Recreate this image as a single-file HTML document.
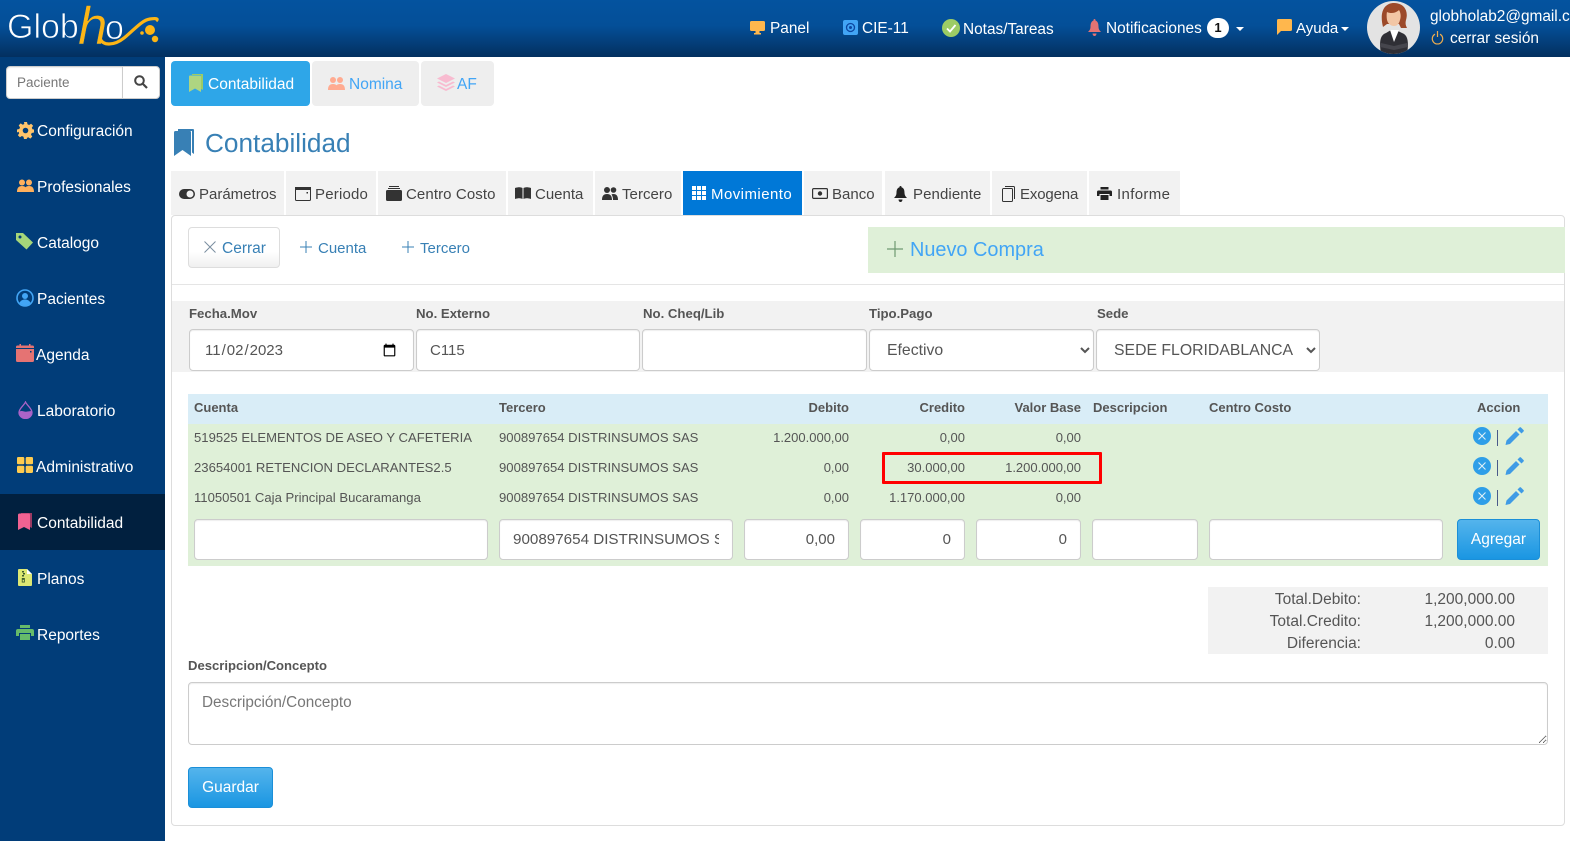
<!DOCTYPE html>
<html lang="es">
<head>
<meta charset="utf-8">
<title>Contabilidad</title>
<style>
*{box-sizing:border-box}
html,body{margin:0;padding:0;width:1570px;height:841px;overflow:hidden;background:#fff;font-family:"Liberation Sans",Arial,sans-serif;color:#555}
.a,.t,svg.i{position:absolute}
.t{white-space:nowrap;line-height:20px}
#hd{position:absolute;left:0;top:0;width:1570px;height:57px;background:linear-gradient(#04539f 0%,#044f98 45%,#03305f 100%)}
#hd .t{color:#fff;font-size:15.4px}
#sb{position:absolute;left:0;top:57px;width:165px;height:784px;background:#013d79}
.m{color:#fff;font-size:15.5px;left:37px}
.tb{position:absolute;top:171px;height:44px;background:#f2f2f2}
.tl{font-size:15px;color:#444}
.lab{font-weight:bold;font-size:13.2px;color:#555}
input,select,textarea{font-family:"Liberation Sans",Arial,sans-serif;position:absolute;background:#fff;border:1px solid #ccc;border-radius:4px;color:#555;font-size:15px;margin:0;box-shadow:inset 0 1px 1px rgba(0,0,0,.07);outline:0}
::placeholder{color:#777;opacity:1}
.th{font-weight:bold;font-size:13px;color:#555}
.td{font-size:13.1px;color:#555}
.n{font-size:13px;color:#555;text-align:right}
.s{font-size:15.5px}
</style>
</head>
<body>
<div id="hd">
<svg class="a" style="left:0;top:0" width="170" height="56" viewBox="0 0 170 56">
<text x="7" y="38" font-family="Liberation Sans" font-size="34" fill="#fff" stroke="#044c93" stroke-width=".8">Glob</text>
<text x="105" y="39" font-family="Liberation Sans" font-size="34" fill="#fff" stroke="#044c93" stroke-width=".8">o</text>
<text x="78" y="44" font-family="Liberation Sans" font-style="italic" font-size="53" fill="#fdb515" stroke="#044c93" stroke-width=".5">h</text>
<path d="M100 38C102 46 114 46 124 38S142 20 150 19 158 19 156 21" fill="none" stroke="#fdb515" stroke-width="3.2"/>
<circle cx="150" cy="30" r="5" fill="#fdb515"/><circle cx="155" cy="39" r="3.2" fill="#fdb515"/><circle cx="142" cy="33" r="1.8" fill="#fdb515"/>
</svg>
<svg class="i" style="left:750px;top:21px" width="15" height="14" viewBox="0 0 15 14"><rect width="15" height="10" rx="1.5" fill="#ffb74d"/><path d="M5.5 10h4v2h1.5v1.5H4V12h1.500z" fill="#ffb74d"/></svg>
<div class="t" style="left:770px;top:19px">Panel</div>
<svg class="i" style="left:843px;top:20px" width="15" height="15" viewBox="0 0 15 15"><rect width="15" height="15" rx="2" fill="#42a5f5"/><circle cx="7.500" cy="7.500" r="4" fill="none" stroke="#0d47a1" stroke-width="1.300"/><circle cx="7.500" cy="7.500" r="1.500" fill="#0d47a1"/></svg>
<div class="t" style="left:862px;top:19px">CIE-11</div>
<svg class="i" style="left:942px;top:19px" width="18" height="18" viewBox="0 0 18 18"><circle cx="9" cy="9" r="9" fill="#9ccc65"/><path d="M5 9.500l3 3 5.500-6.500" fill="none" stroke="#fff" stroke-width="1.800"/></svg>
<div class="t" style="left:963px;top:20px">Notas/Tareas</div>
<svg class="i" style="left:1088px;top:19px" width="13" height="17" viewBox="0 0 13 17"><path d="M6.500 0c1 0 1 1 1 1.500C10 2.500 10.500 5 10.500 8c0 2 1 3.500 2.500 5H0c1.500-1.500 2.500-3 2.500-5 0-3 .5-5.500 3-6.500C5.500 1 5.500 0 6.500 0zM4.500 14.500h4c0 1.500-1 2.500-2 2.500s-2-1-2-2.500z" fill="#e57373"/></svg>
<div class="t" style="left:1106px;top:19px">Notificaciones</div>
<div class="a" style="left:1207px;top:18px;width:22px;height:20px;border-radius:11px;background:#fff;color:#111;font-size:13px;font-weight:bold;text-align:center;line-height:20px">1</div>
<div class="a" style="left:1236px;top:27px;border-left:4px solid transparent;border-right:4px solid transparent;border-top:4px solid #fff"></div>
<svg class="i" style="left:1277px;top:19px" width="15" height="16" viewBox="0 0 15 16"><path d="M1.500 0h12A1.500 1.500 0 0 1 15 1.500v9a1.500 1.500 0 0 1-1.500 1.500H4l-4 4V1.500A1.500 1.500 0 0 1 1.500 0z" fill="#ffb74d"/></svg>
<div class="t" style="left:1296px;top:19px;font-size:15px!important">Ayuda</div>
<div class="a" style="left:1341px;top:27px;border-left:4px solid transparent;border-right:4px solid transparent;border-top:4px solid #fff"></div>
<svg class="i" style="left:1367px;top:1px" width="53" height="53" viewBox="0 0 53 53">
<defs><clipPath id="c"><circle cx="26.500" cy="26.500" r="26.500"/></clipPath></defs>
<g clip-path="url(#c)"><rect width="53" height="53" fill="#e3e3e3"/>
<path d="M16 26C12 10 18 2 27 2s15 7 12 17c-1 4 0 6 1 8l-6 0-2-4H20z" fill="#9c4a2a"/>
<path d="M20 11c4 2 9 1 12-2 2 3 2 7 1 10-1 4-3 6-6 6s-6-2-7-6c-.5-3-.5-6 0-8z" fill="#f2c6a5"/>
<path d="M14 53c-2-12-1-19 5-21l5-3h5l6 3c6 2 7 9 5 21z" fill="#2f2f35"/>
<path d="M23 29l4 12 5-12z" fill="#fff"/>
<path d="M14 42l13 3 13-3 1 4-14 3-14-3z" fill="#46464d"/></g></svg>
<div class="t" style="left:1430px;top:7px">globholab2@gmail.com</div>
<svg class="i" style="left:1431px;top:31px" width="13" height="14" viewBox="0 0 13 14"><path d="M4 3.200A5.200 5.200 0 1 0 9 3.200M6.500 0v6" fill="none" stroke="#f0ad4e" stroke-width="1.200"/></svg>
<div class="t" style="left:1450px;top:29px">cerrar sesión</div>
</div>

<div id="sb"></div>
<input class="a" style="left:6px;top:66px;width:117px;height:33px;border-radius:4px 0 0 4px;padding:0 10px;font-size:13.500px" placeholder="Paciente">
<div class="a" style="left:122px;top:66px;width:38px;height:33px;background:#fff;border:1px solid #ccc;border-radius:0 4px 4px 0"></div>
<svg class="i" style="left:134px;top:75px" width="14" height="14" viewBox="0 0 14 14"><circle cx="5.500" cy="5.500" r="4.300" fill="none" stroke="#444" stroke-width="2"/><path d="M8.500 8.500L13 13" stroke="#444" stroke-width="2.200"/></svg>

<svg class="i" style="left:17px;top:122px" width="17" height="17" viewBox="0 0 17 17"><path fill-rule="evenodd" d="M7 0h3l.5 2.300 1.600.7 2-1.300 2 2-1.300 2 .7 1.600L17 7.500v3l-2.300.5-.7 1.600 1.300 2-2 2-2-1.300-1.600.7L10 17H7l-.5-2.300-1.600-.7-2 1.300-2-2 1.300-2-.7-1.600L0 10.500v-3l2.300-.5.7-1.600-1.300-2 2-2 2 1.300 1.600-.7zM8.500 5.700a2.800 2.800 0 1 0 0 5.600 2.800 2.800 0 0 0 0-5.600z" fill="#ffc46b"/></svg>
<div class="t m" style="top:122px">Configuración</div>
<svg class="i" style="left:17px;top:179px" width="17" height="14" viewBox="0 0 17 14"><circle cx="5" cy="3.500" r="3" fill="#ffb05c"/><circle cx="12" cy="3.500" r="3" fill="#ffb05c"/><path d="M0 13c0-4 1.500-6 5-6 1.500 0 2.500.4 3.500 1.200C9.500 7.400 10.500 7 12 7c3.500 0 5 2 5 6z" fill="#ffb05c"/></svg>
<div class="t m" style="top:178px">Profesionales</div>
<svg class="i" style="left:16px;top:233px" width="18" height="17" viewBox="0 0 18 17"><path d="M0 0h7l10 9.500-6.500 7L0 7z" fill="#a5d67a"/><circle cx="4" cy="4" r="1.500" fill="#013d79"/></svg>
<div class="t m" style="top:234px">Catalogo</div>
<svg class="i" style="left:16px;top:289px" width="18" height="18" viewBox="0 0 18 18"><circle cx="9" cy="9" r="8" fill="none" stroke="#42a5f5" stroke-width="1.600"/><circle cx="9" cy="7" r="3" fill="#42a5f5"/><path d="M3.500 14c1-2.500 3-3.500 5.500-3.500s4.500 1 5.500 3.500c-1.500 1.500-3.500 2.500-5.500 2.500s-4-1-5.500-2.500z" fill="#42a5f5"/></svg>
<div class="t m" style="top:290px">Pacientes</div>
<svg class="i" style="left:16px;top:344px" width="18" height="18" viewBox="0 0 18 18"><path d="M1.500 1.500h2V0h1.500v1.500h8V0h1.500v1.500h2A1.500 1.500 0 0 1 18 3v1H0V3a1.500 1.500 0 0 1 1.500-1.500zM0 5h18v11.500A1.500 1.500 0 0 1 16.500 18h-15A1.500 1.500 0 0 1 0 16.500z" fill="#e57373"/><rect x="14" y="7" width="1.500" height="1.500" fill="#013d79"/></svg>
<div class="t m" style="top:346px;left:36px">Agenda</div>
<svg class="i" style="left:18px;top:401px" width="15" height="18" viewBox="0 0 15 18"><path d="M7.500 1C9 4.500 14 7.500 14 11.500a6.500 6 0 0 1-13 0C1 7.500 6 4.500 7.500 1z" fill="none" stroke="#ab63c8" stroke-width="1.300"/><path d="M1.500 10.500c3-1.500 5 1 8 0l4-.5c.5 5-3 7.500-6 7.500s-6.500-2.500-6-7z" fill="#ab63c8"/></svg>
<div class="t m" style="top:402px">Laboratorio</div>
<svg class="i" style="left:17px;top:457px" width="16" height="16" viewBox="0 0 16 16"><g fill="#ffcb4f"><rect width="7.300" height="7.300" rx="1.200"/><rect x="8.700" width="7.300" height="7.300" rx="1.200"/><rect y="8.700" width="7.300" height="7.300" rx="1.200"/><rect x="8.700" y="8.700" width="7.300" height="7.300" rx="1.200"/></g></svg>
<div class="t m" style="top:458px;left:36px">Administrativo</div>
<div class="a" style="left:0;top:494px;width:165px;height:56px;background:#01203f"></div>
<svg class="i" style="left:18px;top:513px" width="14" height="17" viewBox="0 0 14 17"><path d="M3 0h11v15l-2-1V1H3z" fill="#9c3a63"/><path d="M0 2a1.500 1.500 0 0 1 1.500-1.500H11a1 1 0 0 1 1 1V17L6 14l-6 3z" fill="#f06292"/></svg>
<div class="t m" style="top:514px">Contabilidad</div>
<svg class="i" style="left:18px;top:569px" width="14" height="17" viewBox="0 0 14 17"><path d="M1 0h8l5 5v11a1 1 0 0 1-1 1H1a1 1 0 0 1-1-1V1a1 1 0 0 1 1-1z" fill="#dde873"/><path d="M9 0v5h5z" fill="#fff"/><path d="M4 2h2v1.500H4zM5 4h2v1.500H5zM4 6h2v1.500H4zM3.800 9h3v4.500h-3z" fill="#3d5c2d"/><rect x="4.600" y="10.800" width="1.400" height="1.800" fill="#dde873"/></svg>
<div class="t m" style="top:570px">Planos</div>
<svg class="i" style="left:16px;top:625px" width="18" height="16" viewBox="0 0 18 16"><path d="M4 0h10v3H4zM2 4h14a2 2 0 0 1 2 2v5h-3V8H3v3H0V6a2 2 0 0 1 2-2zM4 9h10v6H4z" fill="#66bb6a"/></svg>
<div class="t m" style="top:626px">Reportes</div>

<div class="a" style="left:171px;top:61px;width:139px;height:45px;background:#2ea6e8;border-radius:4px"></div>
<div class="a" style="left:312px;top:61px;width:107px;height:45px;background:#eee;border-radius:4px"></div>
<div class="a" style="left:421px;top:61px;width:73px;height:45px;background:#eee;border-radius:4px"></div>
<svg class="i" style="left:189px;top:74px" width="14" height="18" viewBox="0 0 14 18"><path d="M3 0h11v16l-2-1V1H3z" fill="#9ccc65"/><path d="M0 2.500a1 1 0 0 1 1-1h10a1 1 0 0 1 1 1V18l-6-3.500L0 18z" fill="#aed581"/></svg>
<div class="t" style="left:208px;top:75px;font-size:15.500px;color:#fff">Contabilidad</div>
<svg class="i" style="left:328px;top:77px" width="17" height="13" viewBox="0 0 17 13"><circle cx="5" cy="3" r="3" fill="#ffab91"/><circle cx="12" cy="3" r="3" fill="#ffab91"/><path d="M0 13c0-4 1.500-6 5-6 1.500 0 2.500.4 3.500 1.200C9.500 7.400 10.500 7 12 7c3.500 0 5 2 5 6z" fill="#ffab91"/></svg>
<div class="t" style="left:349px;top:75px;font-size:15.500px;color:#42a5f5">Nomina</div>
<svg class="i" style="left:437px;top:74px" width="18" height="17" viewBox="0 0 18 17"><path d="M9 0l9 4.500L9 9 0 4.500z" fill="#f8bbd0"/><path d="M2 7.500l7 3.500 7-3.500 2 1L9 13 0 8.500zM2 11.500l7 3.500 7-3.500 2 1L9 17 0 12.500z" fill="#f8bbd0"/></svg>
<div class="t" style="left:457px;top:75px;font-size:15.500px;color:#42a5f5">AF</div>

<svg class="i" style="left:174px;top:129px" width="20" height="27" viewBox="0 0 20 27"><path d="M4 0h15a1 1 0 0 1 1 1v24l-2-1.500V2H4z" fill="#3880b5"/><path d="M0 3.500A1.500 1.500 0 0 1 1.500 2H16a1 1 0 0 1 1 1v24l-8.500-6L0 27z" fill="#3880b5"/></svg>
<div class="t" style="left:205px;top:128px;font-size:26.200px;line-height:30px;color:#3880b5">Contabilidad</div>

<div class="tb" style="left:171px;width:113px"></div>
<div class="tb" style="left:286px;width:90px"></div>
<div class="tb" style="left:378px;width:128px"></div>
<div class="tb" style="left:508px;width:85px"></div>
<div class="tb" style="left:595px;width:86px"></div>
<div class="tb" style="left:683px;width:119px;background:#0078d7"></div>
<div class="tb" style="left:804px;width:78px"></div>
<div class="tb" style="left:885px;width:105px"></div>
<div class="tb" style="left:992px;width:95px"></div>
<div class="tb" style="left:1089px;width:91px"></div>

<svg class="i" style="left:179px;top:189px" width="16" height="10" viewBox="0 0 16 10"><rect width="16" height="10" rx="5" fill="#333"/><circle cx="11" cy="5" r="3.500" fill="#f2f2f2"/></svg>
<div class="t tl" style="left:199px;top:185px">Parámetros</div>
<svg class="i" style="left:295px;top:186px" width="16" height="16" viewBox="0 0 16 16"><path d="M1.500 1.500h13a1 1 0 0 1 1 1v11a1 1 0 0 1-1 1h-13a1 1 0 0 1-1-1v-11a1 1 0 0 1 1-1z" fill="none" stroke="#333"/><rect x="0" y="1" width="16" height="3" fill="#333"/><rect x="11.500" y="6" width="1.500" height="1.500" fill="#333"/></svg>
<div class="t tl" style="left:315px;top:185px;letter-spacing:.2px">Periodo</div>
<svg class="i" style="left:386px;top:186px" width="16" height="15" viewBox="0 0 16 15"><path d="M3 0h10v1H3zM2 2h12v1H2zM1.500 4h13A1.500 1.500 0 0 1 16 5.500v8a1.500 1.500 0 0 1-1.500 1.500h-13A1.500 1.500 0 0 1 0 13.500v-8A1.500 1.500 0 0 1 1.500 4z" fill="#333"/></svg>
<div class="t tl" style="left:406px;top:185px;letter-spacing:.1px">Centro Costo</div>
<svg class="i" style="left:515px;top:187px" width="16" height="13" viewBox="0 0 16 13"><path d="M0 1c3-1 5.500-1 7.500 0v11C5.500 11 3 11 0 12zM8.500 1c2-1 4.500-1 7.500 0v11c-3-1-5.500-1-7.500 0z" fill="#333"/></svg>
<div class="t tl" style="left:535px;top:185px">Cuenta</div>
<svg class="i" style="left:602px;top:187px" width="16" height="13" viewBox="0 0 16 13"><circle cx="5" cy="3" r="3" fill="#333"/><circle cx="11.500" cy="3" r="2.800" fill="#333"/><path d="M0 13c0-4 1.500-6 5-6s5 2 5 6zM11 13c0-2.500-.5-4-1.500-5.500.6-.4 1.200-.5 2-.5 3 0 4.500 2 4.500 6z" fill="#333"/></svg>
<div class="t tl" style="left:622px;top:185px;letter-spacing:.05px">Tercero</div>
<svg class="i" style="left:692px;top:186px" width="14" height="14" viewBox="0 0 14 14"><g fill="#fff"><rect width="4" height="4"/><rect x="5" width="4" height="4"/><rect x="10" width="4" height="4"/><rect y="5" width="4" height="4"/><rect x="5" y="5" width="4" height="4"/><rect x="10" y="5" width="4" height="4"/><rect y="10" width="4" height="4"/><rect x="5" y="10" width="4" height="4"/><rect x="10" y="10" width="4" height="4"/></g></svg>
<div class="t tl" style="left:711px;top:185px;color:#fff;letter-spacing:.45px">Movimiento</div>
<svg class="i" style="left:812px;top:188px" width="16" height="11" viewBox="0 0 16 11"><rect x=".6" y=".6" width="14.800" height="9.800" rx="1" fill="none" stroke="#333" stroke-width="1.200"/><circle cx="8" cy="5.500" r="2.200" fill="#333"/></svg>
<div class="t tl" style="left:832px;top:185px">Banco</div>
<svg class="i" style="left:894px;top:186px" width="13" height="16" viewBox="0 0 13 16"><path d="M6.500 0c1 0 1 .7 1 1.300C10 2 10.500 4.500 10.500 7c0 2 1 3.500 2.500 5H0c1.500-1.500 2.500-3 2.500-5 0-2.500.5-5 3-5.700C5.500.7 5.500 0 6.500 0zM4.500 13.500h4c0 1.500-1 2.500-2 2.500s-2-1-2-2.500z" fill="#222"/></svg>
<div class="t tl" style="left:913px;top:185px;letter-spacing:.1px">Pendiente</div>
<svg class="i" style="left:1002px;top:186px" width="13" height="16" viewBox="0 0 13 16"><path d="M1.500 2.500h8a1 1 0 0 1 1 1v11a1 1 0 0 1-1 1h-8a1 1 0 0 1-1-1v-11a1 1 0 0 1 1-1zM3 .5h8.500a1 1 0 0 1 1 1V13" fill="none" stroke="#333"/></svg>
<div class="t tl" style="left:1020px;top:185px;letter-spacing:-.15px">Exogena</div>
<svg class="i" style="left:1097px;top:187px" width="15" height="13" viewBox="0 0 15 13"><path d="M3.500 0h8v2.500h-8zM1.500 3.500h12A1.500 1.500 0 0 1 15 5v4h-2.500V7h-10v2H0V5a1.500 1.500 0 0 1 1.500-1.500zM3.500 8h8v5h-8z" fill="#222"/></svg>
<div class="t tl" style="left:1117px;top:185px;letter-spacing:.35px">Informe</div>

<div class="a" style="left:171px;top:215px;width:1394px;height:611px;border:1px solid #ddd;border-radius:4px"></div>
<div class="a" style="left:188px;top:227px;width:92px;height:41px;border:1px solid #ddd;border-radius:4px;background:linear-gradient(#fff 60%,#f0f0f0)"></div>
<svg class="i" style="left:204px;top:241px" width="12" height="12" viewBox="0 0 12 12"><path d="M.5.500l11 11M11.500.500l-11 11" stroke="#7a8ea0" fill="none"/></svg>
<div class="t s" style="left:222px;top:239px;color:#3880b5">Cerrar</div>
<svg class="i" style="left:300px;top:241px" width="12" height="12" viewBox="0 0 12 12"><path d="M6 0v12M0 6h12" stroke="#3880b5"/></svg>
<div class="t" style="left:318px;top:239px;font-size:15px;color:#3880b5">Cuenta</div>
<svg class="i" style="left:402px;top:241px" width="12" height="12" viewBox="0 0 12 12"><path d="M6 0v12M0 6h12" stroke="#3880b5"/></svg>
<div class="t" style="left:420px;top:239px;font-size:15px;color:#3880b5">Tercero</div>
<div class="a" style="left:868px;top:227px;width:697px;height:46px;background:#dff0d8"></div>
<svg class="i" style="left:887px;top:241px" width="16" height="16" viewBox="0 0 16 16"><path d="M8 0v16M0 8h16" stroke="#6f9a72" stroke-width="1.200"/></svg>
<div class="t" style="left:910px;top:238px;font-size:19.900px;line-height:24px;color:#42a5f5">Nuevo Compra</div>
<div class="a" style="left:172px;top:284px;width:1392px;height:1px;background:#e5e5e5"></div>

<div class="a" style="left:172px;top:301px;width:1392px;height:71px;background:#f2f2f2"></div>
<div class="t lab" style="left:189px;top:304px">Fecha.Mov</div>
<div class="t lab" style="left:416px;top:304px">No. Externo</div>
<div class="t lab" style="left:643px;top:304px">No. Cheq/Lib</div>
<div class="t lab" style="left:869px;top:304px">Tipo.Pago</div>
<div class="t lab" style="left:1097px;top:304px">Sede</div>
<input type="date" value="2023-11-02" style="left:189px;top:329px;width:225px;height:42px;padding:0 14px">
<input value="C115" style="left:416px;top:329px;width:224px;height:42px;padding:0 13px">
<input style="left:642px;top:329px;width:225px;height:42px">
<select style="left:869px;top:329px;width:225px;height:42px;padding:1px 13px 0;font-size:15.800px"><option>Efectivo</option></select>
<select style="left:1096px;top:329px;width:224px;height:42px;padding:1px 0 0 13px;font-size:15.800px"><option>SEDE FLORIDABLANCA</option></select>

<div class="a" style="left:188px;top:394px;width:1360px;height:30px;background:#d9edf7"></div>
<div class="a" style="left:188px;top:424px;width:1360px;height:142px;background:#dff0d8"></div>
<div class="t th" style="left:194px;top:398px">Cuenta</div>
<div class="t th" style="left:499px;top:398px">Tercero</div>
<div class="t th" style="left:749px;top:398px;width:100px;text-align:right">Debito</div>
<div class="t th" style="left:865px;top:398px;width:100px;text-align:right">Credito</div>
<div class="t th" style="left:981px;top:398px;width:100px;text-align:right">Valor Base</div>
<div class="t th" style="left:1093px;top:398px">Descripcion</div>
<div class="t th" style="left:1209px;top:398px">Centro Costo</div>
<div class="t th" style="left:1477px;top:398px">Accion</div>

<div class="t td" style="left:194px;top:428px">519525 ELEMENTOS DE ASEO Y CAFETERIA</div>
<div class="t td" style="left:499px;top:428px">900897654 DISTRINSUMOS SAS</div>
<div class="t n" style="left:749px;top:428px;width:100px">1.200.000,00</div>
<div class="t n" style="left:865px;top:428px;width:100px">0,00</div>
<div class="t n" style="left:981px;top:428px;width:100px">0,00</div>
<div class="t td" style="left:194px;top:458px">23654001 RETENCION DECLARANTES2.5</div>
<div class="t td" style="left:499px;top:458px">900897654 DISTRINSUMOS SAS</div>
<div class="t n" style="left:749px;top:458px;width:100px">0,00</div>
<div class="t n" style="left:865px;top:458px;width:100px">30.000,00</div>
<div class="t n" style="left:981px;top:458px;width:100px">1.200.000,00</div>
<div class="t td" style="left:194px;top:488px">11050501 Caja Principal Bucaramanga</div>
<div class="t td" style="left:499px;top:488px">900897654 DISTRINSUMOS SAS</div>
<div class="t n" style="left:749px;top:488px;width:100px">0,00</div>
<div class="t n" style="left:865px;top:488px;width:100px">1.170.000,00</div>
<div class="t n" style="left:981px;top:488px;width:100px">0,00</div>
<div class="a" style="left:882px;top:452px;width:220px;height:32px;border:3px solid #f00;border-radius:1px"></div>

<svg class="i" style="left:1473px;top:427px" width="52" height="19" viewBox="0 0 52 19"><circle cx="9" cy="9" r="9" fill="#2e9ee8"/><path d="M5.500 5.500l7 7M12.500 5.500l-7 7" stroke="#dff0f8" stroke-width="1.100"/><path d="M24.500 3v16" stroke="#4a5a8a" stroke-width="1"/><path d="M32.500 18l1-4.500L43 4l3.500 3.500L37 17z" fill="#3f9be5"/><path d="M44.500 2.500l2-2c.5-.5 1-.5 1.500 0l2.500 2.500c.5.5.5 1 0 1.500l-2 2z" fill="#3f9be5"/></svg>
<svg class="i" style="left:1473px;top:457px" width="52" height="19" viewBox="0 0 52 19"><circle cx="9" cy="9" r="9" fill="#2e9ee8"/><path d="M5.500 5.500l7 7M12.500 5.500l-7 7" stroke="#dff0f8" stroke-width="1.100"/><path d="M24.500 3v16" stroke="#4a5a8a" stroke-width="1"/><path d="M32.500 18l1-4.500L43 4l3.500 3.500L37 17z" fill="#3f9be5"/><path d="M44.500 2.500l2-2c.5-.5 1-.5 1.500 0l2.500 2.500c.5.5.5 1 0 1.500l-2 2z" fill="#3f9be5"/></svg>
<svg class="i" style="left:1473px;top:487px" width="52" height="19" viewBox="0 0 52 19"><circle cx="9" cy="9" r="9" fill="#2e9ee8"/><path d="M5.500 5.500l7 7M12.500 5.500l-7 7" stroke="#dff0f8" stroke-width="1.100"/><path d="M24.500 3v16" stroke="#4a5a8a" stroke-width="1"/><path d="M32.500 18l1-4.500L43 4l3.500 3.500L37 17z" fill="#3f9be5"/><path d="M44.500 2.500l2-2c.5-.5 1-.5 1.500 0l2.500 2.500c.5.5.5 1 0 1.500l-2 2z" fill="#3f9be5"/></svg>

<input style="left:194px;top:519px;width:294px;height:41px">
<input value="900897654 DISTRINSUMOS SAS" style="left:499px;top:519px;width:234px;height:41px;padding:0 13px;font-size:15.200px">
<input value="0,00" style="left:744px;top:519px;width:105px;height:41px;padding:0 13px;text-align:right">
<input value="0" style="left:860px;top:519px;width:105px;height:41px;padding:0 13px;text-align:right">
<input value="0" style="left:976px;top:519px;width:105px;height:41px;padding:0 13px;text-align:right">
<input style="left:1092px;top:519px;width:106px;height:41px">
<input style="left:1209px;top:519px;width:234px;height:41px">
<div class="a" style="left:1457px;top:519px;width:83px;height:41px;border-radius:4px;background:linear-gradient(#54b4ec,#1a96e2);border:1px solid #1b8fd8;color:#fff;font-size:15.500px;text-align:center;line-height:39px">Agregar</div>

<div class="a" style="left:1208px;top:587px;width:340px;height:67px;background:#f2f2f2"></div>
<div class="t s" style="left:1161px;top:590px;width:200px;text-align:right">Total.Debito:</div>
<div class="t s" style="left:1315px;top:590px;width:200px;text-align:right">1,200,000.00</div>
<div class="t s" style="left:1161px;top:612px;width:200px;text-align:right">Total.Credito:</div>
<div class="t s" style="left:1315px;top:612px;width:200px;text-align:right">1,200,000.00</div>
<div class="t s" style="left:1161px;top:634px;width:200px;text-align:right">Diferencia:</div>
<div class="t s" style="left:1315px;top:634px;width:200px;text-align:right">0.00</div>

<div class="t lab" style="left:188px;top:656px;font-size:13.100px">Descripcion/Concepto</div>
<textarea placeholder="Descripción/Concepto" style="left:188px;top:682px;width:1360px;height:63px;padding:11px 13px;font-size:15.300px"></textarea>
<div class="a" style="left:188px;top:767px;width:85px;height:41px;border-radius:4px;background:linear-gradient(#54b4ec,#1a96e2);border:1px solid #1b8fd8;color:#fff;font-size:15.500px;text-align:center;line-height:39px">Guardar</div>
</body>
</html>
